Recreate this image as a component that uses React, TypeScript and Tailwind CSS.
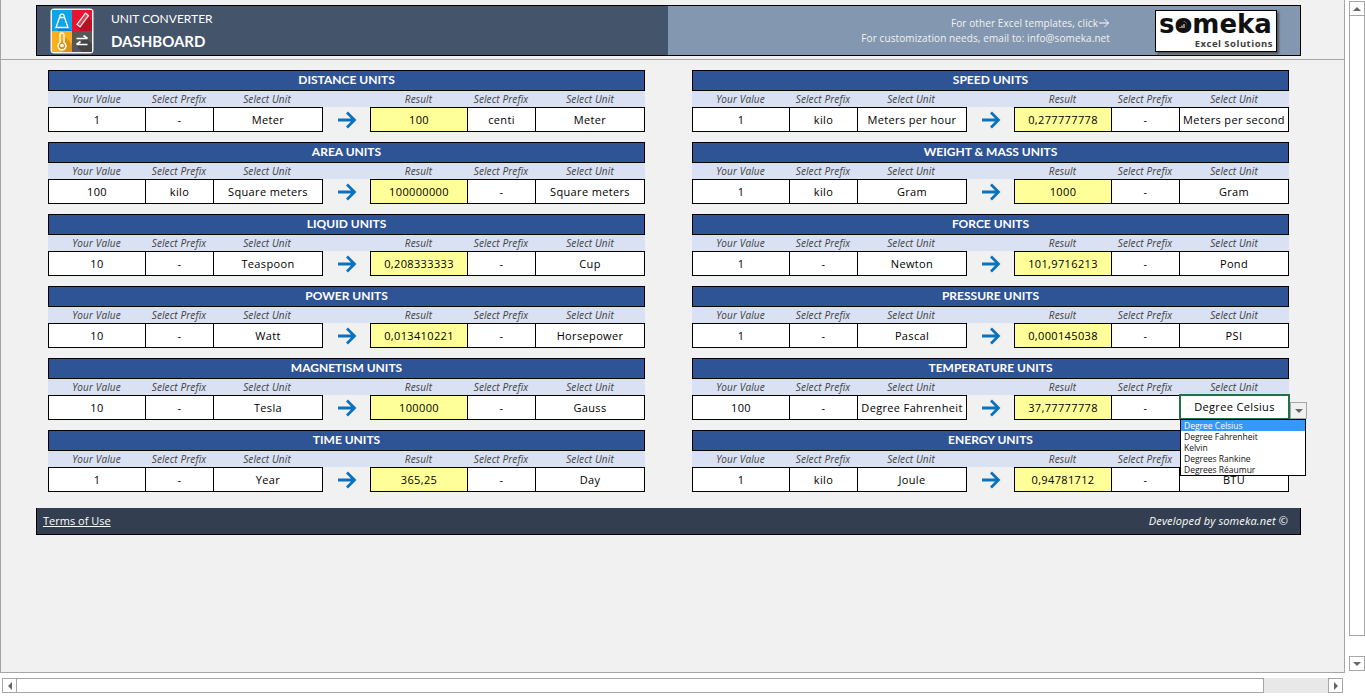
import React from "react";

type Card = { t: string; v: string[] };
const left: Card[] = [
  { t: "DISTANCE UNITS", v: ["1", "-", "Meter", "100", "centi", "Meter"] },
  { t: "AREA UNITS", v: ["100", "kilo", "Square meters", "100000000", "-", "Square meters"] },
  { t: "LIQUID UNITS", v: ["10", "-", "Teaspoon", "0,208333333", "-", "Cup"] },
  { t: "POWER UNITS", v: ["10", "-", "Watt", "0,013410221", "-", "Horsepower"] },
  { t: "MAGNETISM UNITS", v: ["10", "-", "Tesla", "100000", "-", "Gauss"] },
  { t: "TIME UNITS", v: ["1", "-", "Year", "365,25", "-", "Day"] },
];
const right: Card[] = [
  { t: "SPEED UNITS", v: ["1", "kilo", "Meters per hour", "0,277777778", "-", "Meters per second"] },
  { t: "WEIGHT & MASS UNITS", v: ["1", "kilo", "Gram", "1000", "-", "Gram"] },
  { t: "FORCE UNITS", v: ["1", "-", "Newton", "101,9716213", "-", "Pond"] },
  { t: "PRESSURE UNITS", v: ["1", "-", "Pascal", "0,000145038", "-", "PSI"] },
  { t: "TEMPERATURE UNITS", v: ["100", "-", "Degree Fahrenheit", "37,77777778", "-", "Degree Celsius"] },
  { t: "ENERGY UNITS", v: ["1", "kilo", "Joule", "0,94781712", "-", "BTU"] },
];

const Arrow = () => (
  <svg width="20" height="18" viewBox="0 0 20 18" fill="none">
    <path d="M1 9H17.500M10 1.500L17.500 9L10 16.500" stroke="#0b72bd" strokeWidth="2.8" />
  </svg>
);

function Sub({ w, children }: { w: string; children?: React.ReactNode }) {
  return <div className={`${w} text-center italic text-[10px] tracking-[0.12px] leading-[16px] text-[#404040] font-['Open_Sans',sans-serif]`}>{children}</div>;
}

function Val({ w, children, y, l }: { w: string; children: React.ReactNode; y?: boolean; l?: boolean }) {
  return (
    <div
      className={`${w} ${l ? "border-l border-black" : ""} ${y ? "bg-[#ffff99]" : "bg-white"} h-full pt-[1px] flex items-center justify-center whitespace-nowrap text-[11px] tracking-[0.35px] text-black font-['Open_Sans',sans-serif]`}
    >
      {children}
    </div>
  );
}

function UnitCard({ c, sel }: { c: Card; sel?: boolean }) {
  return (
    <div className="w-[597px] h-[62px] flex flex-col relative">
      <div className="h-[21px] pb-[1px] bg-[#2f5496] border border-black text-white font-bold text-[12px] flex items-center justify-center font-['Lato',sans-serif]">
        {c.t}
      </div>
      <div className="h-[16px] bg-[#d9e1f2] flex">
        <Sub w="w-[97px]">Your Value</Sub>
        <Sub w="w-[68px]">Select Prefix</Sub>
        <Sub w="w-[108px]">Select Unit</Sub>
        <Sub w="w-[49px]" />
        <Sub w="w-[97px]">Result</Sub>
        <Sub w="w-[68px]">Select Prefix</Sub>
        <Sub w="w-[110px]">Select Unit</Sub>
      </div>
      <div className="h-[25px] flex">
        <div className="w-[275px] flex h-full border border-black">
          <Val w="w-[96px]">{c.v[0]}</Val>
          <Val w="w-[68px]" l>{c.v[1]}</Val>
          <Val w="flex-1" l>{c.v[2]}</Val>
        </div>
        <div className="w-[47px] flex items-center justify-center pt-[1px]"><Arrow /></div>
        <div className="flex-1 flex h-full border border-black">
          <Val w="w-[96px]" y>{c.v[3]}</Val>
          <Val w="w-[68px]" l>{c.v[4]}</Val>
          <Val w="flex-1" l>{c.v[5]}</Val>
        </div>
      </div>
      {sel && (
        <>
          <div className="absolute left-[487px] top-[36px] w-[111px] h-[26px] border-2 border-[#217346] bg-white flex items-center justify-center text-[11px] tracking-[0.35px] font-['Open_Sans',sans-serif]">
            {c.v[5]}
          </div>
          <div className="absolute left-[598px] top-[44px] w-[17px] h-[17px] border border-[#a6a6a6] bg-[#f0f0f0] flex items-center justify-center">
            <div className="w-0 h-0 border-x-[4px] border-x-transparent border-t-[4px] border-t-[#666]" />
          </div>
          <div className="absolute z-10 left-[488px] top-[61px] w-[126px] h-[57px] border border-black bg-white text-[8.5px] leading-[11px] text-[#111] font-['Open_Sans',sans-serif]">
            <div className="bg-[#3399ff] text-white pl-[3px]">Degree Celsius</div>
            <div className="pl-[3px]">Degree Fahrenheit</div>
            <div className="pl-[3px]">Kelvin</div>
            <div className="pl-[3px]">Degrees Rankine</div>
            <div className="pl-[3px]">Degrees Réaumur</div>
          </div>
        </>
      )}
    </div>
  );
}

function Logo() {
  return (
    <svg width="44" height="46" viewBox="0 0 44 46" className="shrink-0">
      <rect x="0.5" y="0.5" width="43" height="45" rx="3.500" fill="#f4f4f4" />
      <rect x="2" y="2" width="20" height="21" fill="#0ea3ea" />
      <rect x="22" y="2" width="20" height="21" fill="#e6142d" />
      <rect x="2" y="23" width="20" height="21" fill="#fbb01b" />
      <rect x="22" y="23" width="20" height="21" fill="#575757" />
      <path d="M17 19L22 23H8L6 19Z" fill="#0884c4" />
      <path d="M36 7L42 13V23H31L26 18Z" fill="#bd0f24" />
      <path d="M15 29L22 36V44H12L8 38Z" fill="#d9921a" />
      <path d="M36 30L42 36V44H32L26 37Z" fill="#444" />
      <path d="M9.500 9.500H14.500L18 19.500H6Z M10 9.500a2.300 2.300 0 1 1 4 0" fill="none" stroke="#fff" strokeWidth="1.300" />
      <path d="M35.500 5l3 2.500L30 19l-3-2.500Z" fill="#fff" fillOpacity="0.25" stroke="#fff" strokeWidth="1.200" />
      <path d="M10 27a2 2 0 0 1 4 0v7.500a4 4 0 1 1-4 0Z" fill="none" stroke="#fff" strokeWidth="1.400" />
      <circle cx="12" cy="37.500" r="1.800" fill="#fff" />
      <path d="M26.500 30.500H37.500M33.500 27.500l4 3M37.500 36.500H26.500M30.500 33.500l-4 3" fill="none" stroke="#fff" strokeWidth="1.700" />
    </svg>
  );
}

const Btn = ({ cls, children }: { cls: string; children: React.ReactNode }) => (
  <div className={`${cls} bg-white border border-[#a6a6a6] flex items-center justify-center shrink-0`}>{children}</div>
);

export default function App() {
  return (
    <div className="w-[1365px] h-[700px] bg-white overflow-hidden flex flex-col font-['Open_Sans',sans-serif]">
      <div className="flex h-[673px]">
        <div className="w-[1345px] h-full bg-[#f1f1f1] border-l border-r border-b border-[#a6a6a6]">
          <div className="h-[60px] border-b border-[#a6a6a6] pt-[5px] pl-[35px]">
            <div className="w-[1265px] h-[51px] border border-black flex">
              <div className="w-[631px] bg-[#44546a] flex items-center pl-[13px]">
                <Logo />
                <div className="ml-[17px] text-white font-['Lato',sans-serif]">
                  <div className="text-[12px] leading-[16px]">UNIT CONVERTER</div>
                  <div className="text-[15px] leading-[20px] mt-[4px] font-bold">DASHBOARD</div>
                </div>
              </div>
              <div className="flex-1 bg-[#8497b0] flex items-center justify-end pr-[23px]">
                <div className="text-[#f2f2f2] text-right text-[10px] leading-[15px] mr-[45px] tracking-[0.1px]">
                  <div className="flex justify-end items-center gap-[1px]">
                    For other Excel templates, click
                    <svg width="11" height="10" viewBox="0 0 11 10" fill="none"><path d="M0 5H9.500M5.500 1L9.500 5L5.500 9" stroke="#fff" strokeWidth="1" /></svg>
                  </div>
                  <div>For customization needs, email to: info@someka.net</div>
                </div>
                <div className="relative w-[122px] h-[42px] bg-white border border-black shadow-[2px_2px_2px_#555] flex flex-col leading-none text-[#111]">
                  <div className="text-[26px] leading-[25px] font-bold ml-[3px] mt-[1px] font-['DejaVu_Sans',sans-serif]">someka</div>
                  <div className="absolute left-[21px] top-[10px]">
                    <svg width="10" height="10" viewBox="0 0 10 10"><circle cx="5" cy="5" r="5" fill="#111" /><path d="M3 7V6M5 7V4.500M7 7V3" stroke="#fff" strokeWidth="1" /></svg>
                  </div>
                  <div className="self-end mr-[3px] mt-[1px] text-[9.500px] leading-[12px] font-bold text-[#404040] tracking-[0.5px]">Excel Solutions</div>
                </div>
              </div>
            </div>
          </div>
          <div className="pl-[47px] pt-[10px] flex gap-[47px]">
            <div className="flex flex-col gap-[10px]">{left.map((c) => <UnitCard key={c.t} c={c} />)}</div>
            <div className="flex flex-col gap-[10px]">{right.map((c) => <UnitCard key={c.t} c={c} sel={c.t === "TEMPERATURE UNITS"} />)}</div>
          </div>
          <div className="ml-[35px] mt-[16px] w-[1265px] h-[27px] bg-[#333f50] border-l border-r border-b border-black flex items-center justify-between pl-[6px] pr-[12px] text-white">
            <span className="underline text-[11px] mt-[1px]">Terms of Use</span>
            <span className="italic text-[11px] tracking-[0.15px]">Developed by someka.net ©</span>
          </div>
        </div>
        <div className="flex-1 pl-[4px] pt-[1px] pb-[2px] flex flex-col">
          <Btn cls="w-[16px] h-[15px]"><div className="w-0 h-0 border-x-[4px] border-x-transparent border-b-[4px] border-b-[#666]" /></Btn>
          <div className="w-[16px] flex-1 bg-white border-x border-b border-[#a6a6a6] mb-[20px]" />
          <Btn cls="w-[16px] h-[15px]"><div className="w-0 h-0 border-x-[4px] border-x-transparent border-t-[4px] border-t-[#666]" /></Btn>
        </div>
      </div>
      <div className="h-[15px] mt-[5px] ml-[2px] w-[1341px] flex bg-[#e8e8e8]">
        <Btn cls="w-[15px] h-full"><div className="w-0 h-0 border-y-[4px] border-y-transparent border-r-[4px] border-r-[#666]" /></Btn>
        <div className="w-[1247px] h-full bg-white border-y border-r border-[#a6a6a6]" />
        <div className="flex-1" />
        <Btn cls="w-[15px] h-full"><div className="w-0 h-0 border-y-[4px] border-y-transparent border-l-[4px] border-l-[#666]" /></Btn>
      </div>
    </div>
  );
}
